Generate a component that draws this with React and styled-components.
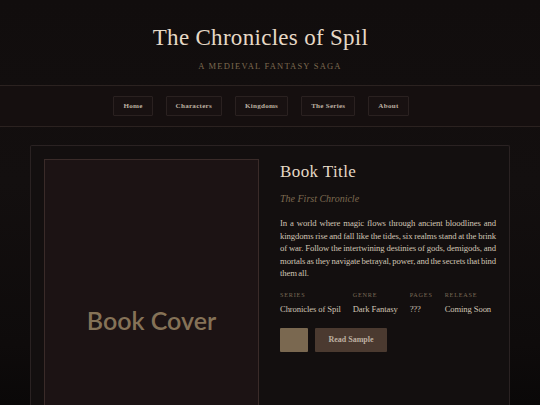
import React from 'react';
import styled, { createGlobalStyle } from 'styled-components';

const GOLD = '#7d6a50';
const CREAM = '#e6d9c6';
const TEXT = '#d0c4b4';
const LINE = '#2b2220';

const GlobalStyle = createGlobalStyle`
  html, body {
    margin: 0;
    padding: 0;
    height: 100%;
    background: #0b0909;
  }
  body {
    font-family: "Liberation Serif", "DejaVu Serif", serif;
    color: ${TEXT};
  }
  #root {
    min-height: 100%;
  }
`;

const NAV_ITEMS = ['Home', 'Characters', 'Kingdoms', 'The Series', 'About'];

const META = [
  { label: 'Series', value: 'Chronicles of Spil' },
  { label: 'Genre', value: 'Dark Fantasy' },
  { label: 'Pages', value: '???' },
  { label: 'Release', value: 'Coming Soon' },
];

export default function App() {
  return (
    <Page>
      <GlobalStyle />
      <Header>
        <Title>The Chronicles of Spil</Title>
        <Subtitle>A Medieval Fantasy Saga</Subtitle>
      </Header>
      <Nav>
        {NAV_ITEMS.map((item) => (
          <NavButton key={item}>{item}</NavButton>
        ))}
      </Nav>
      <Card>
        <Cover>
          <CoverLabel>Book Cover</CoverLabel>
        </Cover>
        <Details>
          <BookTitle>Book Title</BookTitle>
          <Tagline>The First Chronicle</Tagline>
          <Blurb>
            In a world where magic flows through ancient bloodlines and kingdoms rise and fall
            like the tides, six realms stand at the brink of war. Follow the intertwining
            destinies of gods, demigods, and mortals as they navigate betrayal, power, and the
            secrets that bind them all.
          </Blurb>
          <MetaRow>
            {META.map((m) => (
              <MetaItem key={m.label}>
                <MetaLabel>{m.label}</MetaLabel>
                <MetaValue>{m.value}</MetaValue>
              </MetaItem>
            ))}
          </MetaRow>
          <Actions>
            <Swatch />
            <ActionButton>Read Sample</ActionButton>
          </Actions>
        </Details>
      </Card>
    </Page>
  );
}

const Page = styled.div`
  height: 405px;
  overflow: hidden;
  background: linear-gradient(180deg, #110d0d 0%, #130f0f 45%, #0e0b0b 85%, #0a0808 100%);
  display: flex;
  flex-direction: column;
`;

const Header = styled.header`
  display: flex;
  flex-direction: column;
  align-items: center;
  padding: 24px 0 0;
  height: 61px;
`;

const Title = styled.h1`
  margin: 0;
  padding-right: 19px;
  font-family: "Liberation Serif", serif;
  font-weight: 400;
  font-size: 23px;
  letter-spacing: 0.3px;
  color: ${CREAM};
  line-height: 27px;
`;

const Subtitle = styled.div`
  margin-top: 10px;
  font-size: 8.5px;
  letter-spacing: 1.2px;
  text-transform: uppercase;
  color: ${GOLD};
`;

const Nav = styled.nav`
  display: flex;
  justify-content: center;
  gap: 13px;
  padding: 10px 18px 10px 0;
  border-top: 1px solid ${LINE};
  border-bottom: 1px solid ${LINE};
  background: #150f0f;
`;

const NavButton = styled.div`
  height: 18px;
  padding: 0 9px;
  display: flex;
  align-items: center;
  border: 1px solid #2a2120;
  background: #181111;
  font-size: 7.1px;
  font-weight: 700;
  letter-spacing: 0.25px;
  color: #bdb0a1;
  border-radius: 1px;
`;

const Card = styled.main`
  margin: 18px auto 0;
  width: 480px;
  box-sizing: border-box;
  padding: 13px 13px 0;
  border: 1px solid #2a2222;
  border-bottom: none;
  border-radius: 2px 2px 0 0;
  background: #130f0f;
  display: flex;
  gap: 21px;
  flex: 1;
`;

const Cover = styled.div`
  width: 215px;
  flex-shrink: 0;
  box-sizing: border-box;
  border: 1px solid #3a2b29;
  border-bottom: none;
  background: #1c1314;
  display: flex;
  justify-content: center;
  padding-top: 145px;
`;

const CoverLabel = styled.div`
  font-family: Lato, "Open Sans", sans-serif;
  font-weight: 600;
  font-size: 25px;
  color: #857257;
  height: 30px;
`;

const Details = styled.section`
  width: 216px;
  min-width: 0;
  display: flex;
  flex-direction: column;
  padding-top: 2px;
`;

const BookTitle = styled.h2`
  margin: 0;
  font-weight: 400;
  font-size: 17px;
  line-height: 22px;
  letter-spacing: 0.4px;
  color: ${CREAM};
`;

const Tagline = styled.div`
  margin-top: 10px;
  font-style: italic;
  font-size: 10px;
  color: ${GOLD};
`;

const Blurb = styled.p`
  margin: 13px 0 0;
  font-size: 8.7px;
  letter-spacing: -0.1px;
  word-spacing: -0.72px;
  line-height: 12.5px;
  text-align: justify;
  color: ${TEXT};
`;

const MetaRow = styled.div`
  display: flex;
  gap: 12px;
  margin-top: 11px;
`;

const MetaItem = styled.div`
  display: flex;
  flex-direction: column;
  gap: 6px;
  white-space: nowrap;
`;

const MetaLabel = styled.div`
  font-size: 6.2px;
  letter-spacing: 0.8px;
  text-transform: uppercase;
  color: #7a6a56;
`;

const MetaValue = styled.div`
  font-size: 8.6px;
  letter-spacing: -0.1px;
  color: ${TEXT};
`;

const Actions = styled.div`
  display: flex;
  gap: 7px;
  margin-top: 14px;
`;

const Swatch = styled.div`
  width: 28px;
  height: 24px;
  background: #7a6850;
  border-radius: 1px;
`;

const ActionButton = styled.div`
  width: 72px;
  height: 24px;
  display: flex;
  align-items: center;
  justify-content: center;
  background: #4b3a30;
  border-radius: 1px;
  font-size: 8px;
  font-weight: 700;
  color: #bdb0a1;
`;
